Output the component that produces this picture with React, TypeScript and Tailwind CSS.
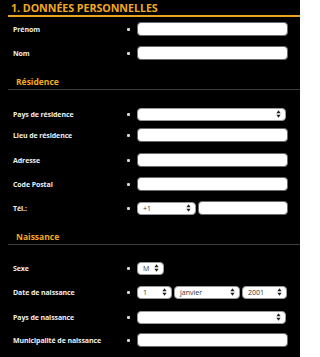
type Field =
  | { kind: 'input'; w: string }
  | { kind: 'select'; w: string; value?: string };

function Arrows() {
  return (
    <svg width="5" height="8" viewBox="0 0 5 8" className="shrink-0">
      <path d="M2.5 0.3 L4.6 3.2 L0.4 3.2 Z" fill="#222" />
      <path d="M2.5 7.7 L4.6 4.8 L0.4 4.8 Z" fill="#222" />
    </svg>
  );
}

function Control({ f }: { f: Field }) {
  if (f.kind === 'input') {
    return <div className={`h-[14px] ${f.w} rounded-[4px] border border-[#6b6b6b] bg-white`} />;
  }
  return (
    <div
      className={`flex h-[13px] ${f.w} items-center justify-between rounded-[4px] border border-[#9a9a9a] bg-white pl-[5px] pr-[4px] text-[7px] leading-none text-[#333]`}
    >
      <span>{f.value ?? ''}</span>
      <Arrows />
    </div>
  );
}

function Row({ label, mt, fields }: { label: string; mt: string; fields: Field[] }) {
  return (
    <div className={`flex h-[14px] items-center ${mt}`}>
      <div className="w-[125px] shrink-0 pl-[13px] text-[7px] font-bold leading-none tracking-[-0.1px] text-[#eeeeee]">
        {label}
      </div>
      <div className="flex w-[12px] shrink-0 justify-start pl-[2px]">
        <span className="block h-[3px] w-[3px] rounded-[1px] bg-[#d8d8d8]" />
      </div>
      <div className="flex items-center gap-[2px]">
        {fields.map((f, i) => (
          <Control key={i} f={f} />
        ))}
      </div>
    </div>
  );
}

function Section({ title, mt }: { title: string; mt: string }) {
  return (
    <div className={`ml-[8px] border-b border-[#3c3c3c] pl-[8px] ${mt}`}>
      <p className="h-[15px] text-[8.5px] font-bold leading-[15px] text-[#f2aa1f]">{title}</p>
    </div>
  );
}

export default function App() {
  return (
    <div
      className="h-[357px] w-[300px] overflow-hidden bg-black"
      style={{ fontFamily: '"Open Sans", "Liberation Sans", sans-serif' }}
    >
      {/* Titre */}
      <div className="ml-[8px] h-[17px] border-b-2 border-[#e9a21c] pl-[3px] pt-[1px]">
        <h1 className="text-[10.7px] font-bold leading-[14px] tracking-[-0.05px] text-[#f2aa1f]">
          1. DONNÉES PERSONNELLES
        </h1>
      </div>

      <Row label="Prénom" mt="mt-[5px]" fields={[{ kind: 'input', w: 'w-[151px]' }]} />
      <Row label="Nom" mt="mt-[10px]" fields={[{ kind: 'input', w: 'w-[151px]' }]} />

      <Section title="Résidence" mt="mt-[14px]" />

      <Row label="Pays de résidence" mt="mt-[17px]" fields={[{ kind: 'select', w: 'w-[149px]' }]} />
      <Row label="Lieu de résidence" mt="mt-[7px]" fields={[{ kind: 'input', w: 'w-[151px]' }]} />
      <Row label="Adresse" mt="mt-[11px]" fields={[{ kind: 'input', w: 'w-[151px]' }]} />
      <Row label="Code Postal" mt="mt-[10px]" fields={[{ kind: 'input', w: 'w-[151px]' }]} />
      <Row
        label="Tél.:"
        mt="mt-[10px]"
        fields={[
          { kind: 'select', w: 'w-[59px]', value: '+1' },
          { kind: 'input', w: 'w-[90px]' },
        ]}
      />

      <Section title="Naissance" mt="mt-[14px]" />

      <Row label="Sexe" mt="mt-[16px]" fields={[{ kind: 'select', w: 'w-[27px]', value: 'M' }]} />
      <Row
        label="Date de naissance"
        mt="mt-[10px]"
        fields={[
          { kind: 'select', w: 'w-[35px]', value: '1' },
          { kind: 'select', w: 'w-[66px]', value: 'janvier' },
          { kind: 'select', w: 'w-[45px]', value: '2001' },
        ]}
      />
      <Row label="Pays de naissance" mt="mt-[11px]" fields={[{ kind: 'select', w: 'w-[149px]' }]} />
      <Row label="Municipalité de naissance" mt="mt-[9px]" fields={[{ kind: 'input', w: 'w-[151px]' }]} />
    </div>
  );
}
